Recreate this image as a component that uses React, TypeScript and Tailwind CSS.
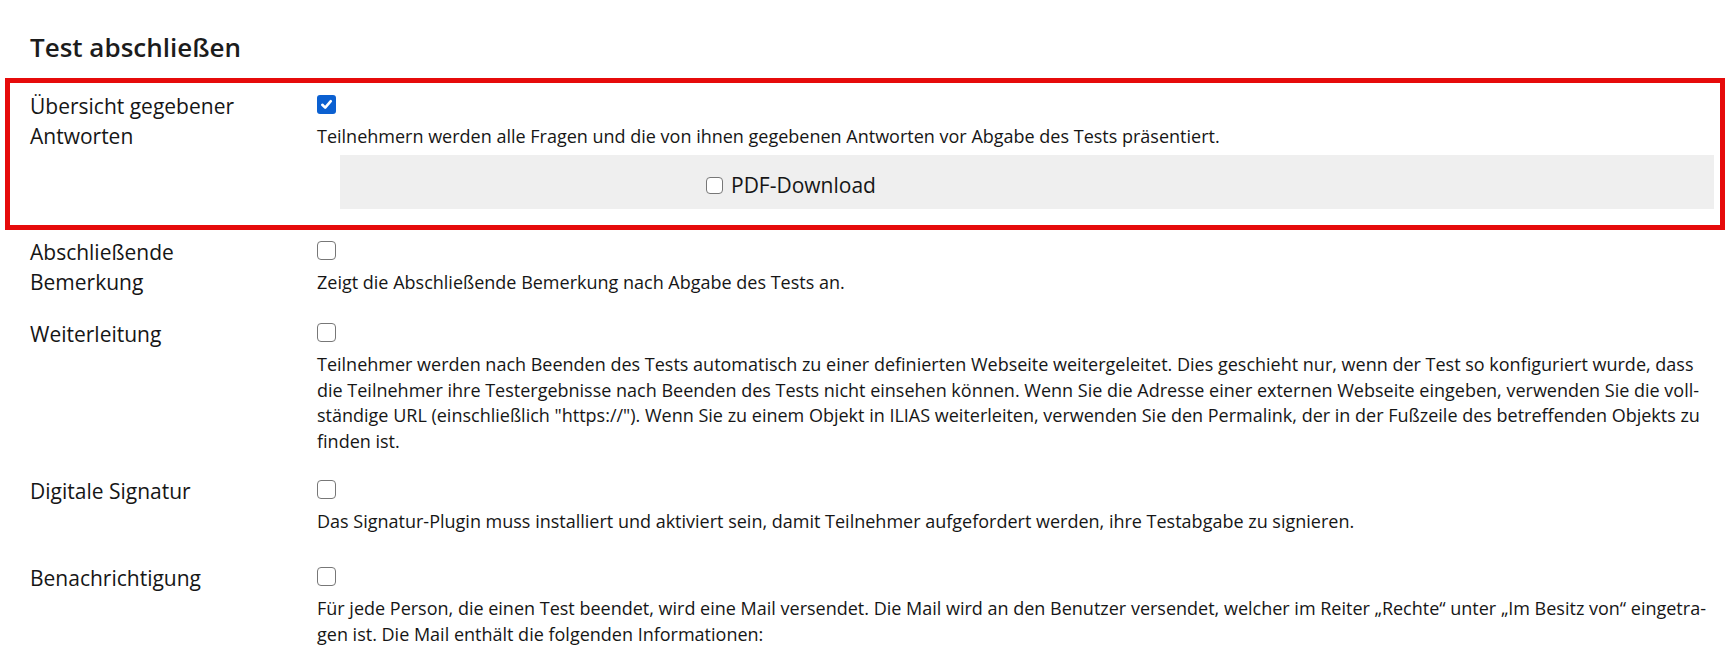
import React from "react";

function Box({ checked = false, small = false }: { checked?: boolean; small?: boolean }) {
  const size = small ? "w-[17px] h-[17px]" : "w-[19px] h-[19px]";
  if (checked) {
    return (
      <div className={`${size} shrink-0 rounded-[3px] bg-[#0b60d1] flex items-center justify-center`}>
        <svg width="13" height="13" viewBox="0 0 13 13">
          <path d="M2.3 6.8 L5.2 9.6 L10.8 3.2" fill="none" stroke="white" strokeWidth="2.6" strokeLinecap="round" strokeLinejoin="round" />
        </svg>
      </div>
    );
  }
  return <div className={`${size} shrink-0 rounded-[4px] border-[1.5px] border-[#777777] bg-white`} />;
}

function Row({
  label,
  checked,
  text,
  children,
  extra = "",
}: {
  label: string;
  checked?: boolean;
  text: React.ReactNode;
  children?: React.ReactNode;
  extra?: string;
}) {
  return (
    <div className={`grid grid-cols-[287px_1fr] ${extra}`}>
      <div className="pr-[50px] text-[21px] leading-[30px]">{label}</div>
      <div>
        <div className="mt-[4px]">
          <Box checked={checked} />
        </div>
        <p className="mt-[10px] text-[18px] leading-[25.4px]">{text}</p>
        {children}
      </div>
    </div>
  );
}

export default function App() {
  return (
    <div className="w-full h-[650px] overflow-hidden bg-white text-[#161616] font-['Open_Sans',_'Noto_Sans',_sans-serif]">
      <h2 className="pl-[30px] pt-[29px] text-[26px] leading-[36px] font-semibold text-[#1c1c1c]">
        Test abschließen
      </h2>

      <div className="mt-[13px] ml-[5px] w-[1720px] border-[5px] border-[#e60b0b] pl-[20px] pr-[6px] pt-[8px] pb-[16px]">
        <Row
          label="Übersicht gegebener Antworten"
          checked
          text="Teilnehmern werden alle Fragen und die von ihnen gegebenen Antworten vor Abgabe des Tests präsentiert."
        >
          <div className="mt-[6px] ml-[23px] h-[54px] bg-[#efefef] flex items-center gap-[8px] pl-[366px] pt-[6px]">
            <Box small />
            <span className="text-[21px] leading-[30px]">PDF-Download</span>
          </div>
        </Row>
      </div>

      <div className="mt-[7px] pl-[30px] pr-[19px] flex flex-col gap-[22px]">
        <Row
          label="Abschließende Bemerkung"
          text="Zeigt die Abschließende Bemerkung nach Abgabe des Tests an."
        />
        <Row
          label="Weiterleitung"
          text={
            <>
              Teilnehmer werden nach Beenden des Tests automatisch zu einer definierten Webseite weitergeleitet. Dies
              geschieht nur, wenn der Test so konfiguriert wurde, dass die Teilnehmer ihre Testergebnisse nach Beenden
              des Tests nicht einsehen können. Wenn Sie die Adresse einer externen Webseite eingeben, verwenden Sie die
              voll{"\u00AD"}ständige URL (einschließlich "https://"). Wenn Sie zu einem Objekt in ILIAS weiterleiten,
              verwenden Sie den Permalink, der in der Fußzeile des betreffenden Objekts zu finden ist.
            </>
          }
        />
        <Row
          label="Digitale Signatur"
          extra="pb-[7px]"
          text="Das Signatur-Plugin muss installiert und aktiviert sein, damit Teilnehmer aufgefordert werden, ihre Testabgabe zu signieren."
        />
        <Row
          label="Benachrichtigung"
          text={
            <>
              Für jede Person, die einen Test beendet, wird eine Mail versendet. Die Mail wird an den Benutzer
              versendet, welcher im Reiter „Rechte“ unter „Im Besitz von“ eingetra{"\u00AD"}gen ist. Die Mail enthält
              die folgenden Informationen:
            </>
          }
        />
      </div>
    </div>
  );
}
